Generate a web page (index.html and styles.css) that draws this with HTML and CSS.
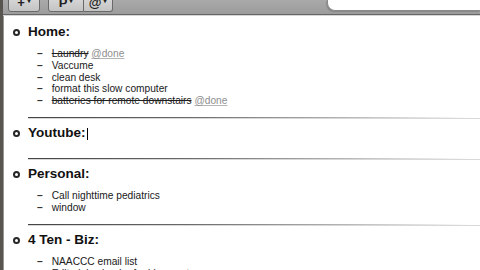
FILE: index.html
```
<!DOCTYPE html>
<html>
<head>
<meta charset="utf-8">
<link rel="stylesheet" href="styles.css">
</head>
<body>
<div class="window">
  <div class="toolbar">
    <div class="btn btn-add"><span class="glyph">+</span><span class="caret">▾</span></div>
    <div class="seg">
      <div class="btn btn-p"><span class="glyph">P</span><span class="caret">▾</span></div>
      <div class="btn btn-at"><span class="glyph">@</span><span class="caret">▾</span></div>
    </div>
    <div class="search"></div>
  </div>
  <div class="content">
    <section class="project">
      <h2 class="heading"><span class="bullet"></span>Home:</h2>
      <ul class="tasks">
        <li><span class="dash">–</span><span class="done">Laundry</span> <span class="tag">@done</span></li>
        <li><span class="dash">–</span>Vaccume</li>
        <li><span class="dash">–</span>clean desk</li>
        <li><span class="dash">–</span>format this slow computer</li>
        <li><span class="dash">–</span><span class="done">batteries for remote downstairs</span> <span class="tag">@done</span></li>
      </ul>
    </section>
    <div class="sep"></div>
    <section class="project empty">
      <h2 class="heading"><span class="bullet"></span>Youtube:<span class="cursor"></span></h2>
    </section>
    <div class="sep"></div>
    <section class="project">
      <h2 class="heading"><span class="bullet"></span>Personal:</h2>
      <ul class="tasks">
        <li><span class="dash">–</span>Call nighttime pediatrics</li>
        <li><span class="dash">–</span>window</li>
      </ul>
    </section>
    <div class="sep"></div>
    <section class="project">
      <h2 class="heading"><span class="bullet"></span>4 Ten - Biz:</h2>
      <ul class="tasks">
        <li><span class="dash">–</span>NAACCC email list</li>
        <li><span class="dash">–</span>Editorial calendar for blog posts</li>
      </ul>
    </section>
  </div>
</div>
</body>
</html>
```
FILE: styles.css
```
html, body {
  margin: 0;
  padding: 0;
  width: 480px;
  height: 270px;
  overflow: hidden;
  background: #fff;
}
.window {
  width: 480px;
  height: 270px;
  box-sizing: border-box;
  border-left: 3px solid #58544f;
  box-shadow: inset 1px 0 #9a9895;
  display: flex;
  flex-direction: column;
  font-family: "Liberation Sans", Arial, sans-serif;
  color: #1e1e1e;
  overflow: hidden;
}
.toolbar {
  height: 14px;
  flex: none;
  display: flex;
  align-items: flex-start;
  padding-left: 5px;
  background: linear-gradient(#a9a9a9, #9c9c9c);
  border-bottom: 1px solid #666;
  box-shadow: 0 1px 0 #d6d6d6;
  overflow: hidden;
}
.seg {
  display: flex;
  margin-left: 8px;
}
.btn {
  box-sizing: border-box;
  height: 16px;
  margin-top: -4px;
  border: 1px solid #6a6a6a;
  border-radius: 0 0 3px 3px;
  background: linear-gradient(#d9d9d9, #c4c4c4);
  display: flex;
  justify-content: center;
  gap: 2px;
  font-size: 13px;
  line-height: 12px;
  font-weight: bold;
  color: #222;
}
.btn-add { width: 32px; }
.btn-p { width: 36px; border-radius: 0 0 0 3px; }
.btn-at { width: 29px; border-left: none; border-radius: 0 0 3px 0; }
.caret {
  font-size: 8px;
  line-height: 16px;
  margin-top: -4px;
}
.search {
  margin-left: auto;
  width: 152px;
  height: 10px;
  background: #fff;
  border-left: 1px solid #8a8a8a;
  border-bottom: 1px solid #8a8a8a;
  border-radius: 0 0 0 8px;
  box-shadow: -1px 1px 1px rgba(0,0,0,0.15);
}
.content {
  padding: 9px 0 0 10px;
}
.project {
  padding: 0 0 10px;
}
.project.empty {
  padding-bottom: 16.5px;
}
.sep + .project {
  padding-top: 7.5px;
}
.heading {
  margin: 0;
  height: 16px;
  display: flex;
  align-items: center;
  font-size: 13.5px;
  line-height: 16px;
  font-weight: bold;
  color: #111;
}
.bullet {
  box-sizing: border-box;
  width: 7px;
  height: 7px;
  border: 2px solid #262626;
  border-radius: 50%;
  margin-right: 8px;
  margin-top: 1px;
}
.cursor {
  width: 1px;
  height: 12px;
  background: #000;
  margin-left: 1px;
  margin-top: 2px;
}
.tasks {
  list-style: none;
  margin: 8px 0 0;
  padding: 0 0 0 24px;
  font-size: 10.2px;
  line-height: 11.75px;
  color: #202020;
}
.tasks li {
  white-space: nowrap;
}
.dash {
  display: inline-block;
  width: 14.7px;
  font-weight: bold;
  color: #333;
}
.done {
  text-decoration: line-through;
}
.tag {
  color: #8e8e8e;
  text-decoration: underline;
  text-decoration-color: #b5b5b5;
}
.sep {
  height: 1px;
  margin-left: 15px;
  background: linear-gradient(to right, #444, #6a6a6a 35%, #b5b5b5 70%, #fff 98%);
  box-shadow: 0 1px 0 rgba(190,190,190,0.6);
}
```
